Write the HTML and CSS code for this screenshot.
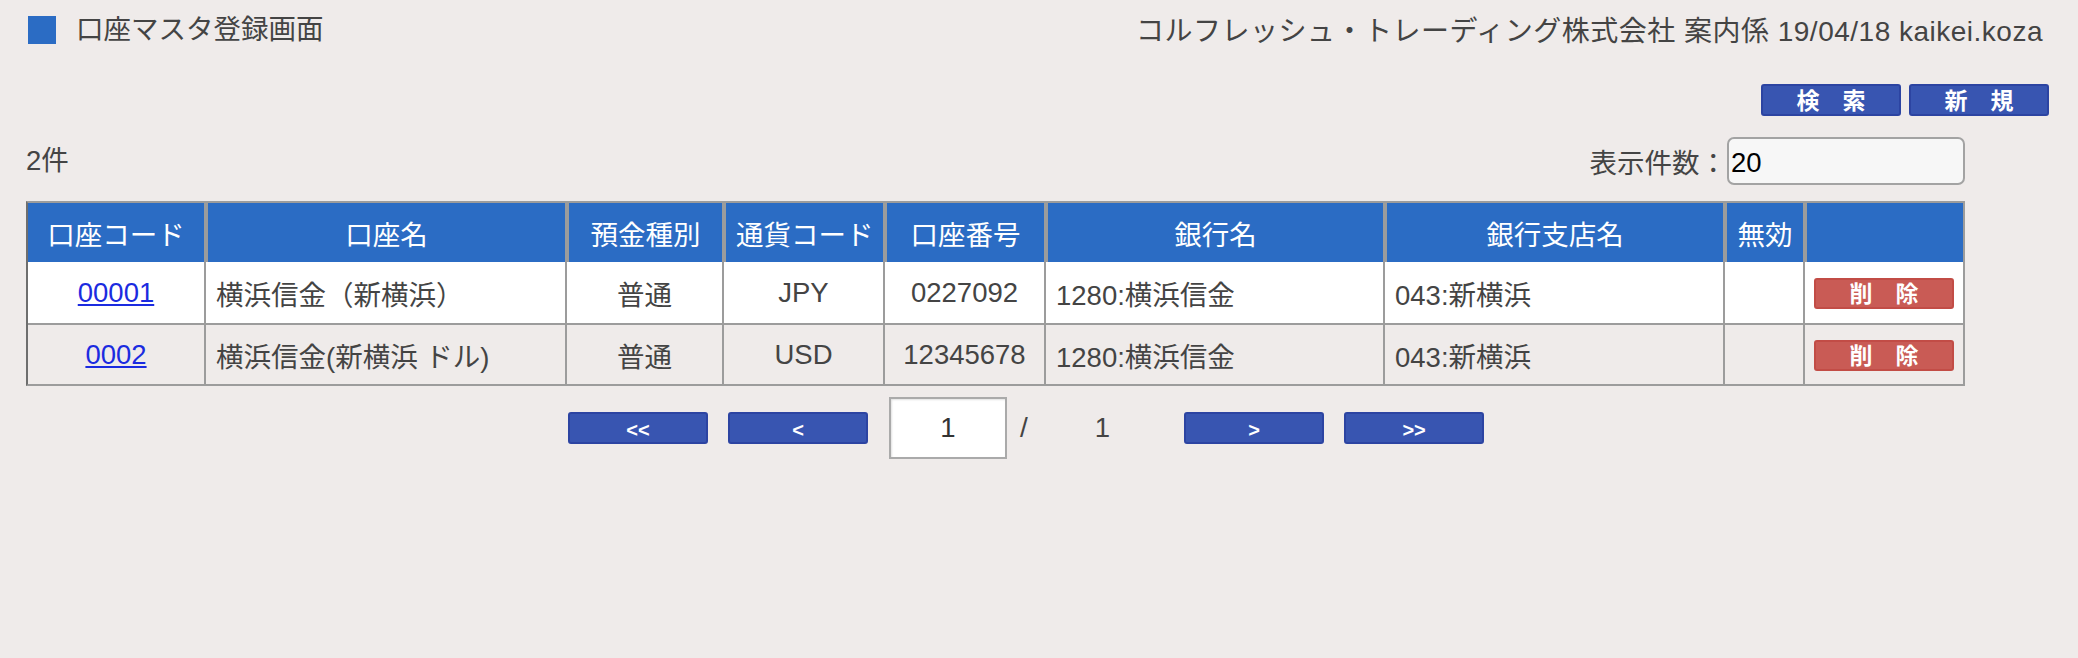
FILE: index.html
```html
<!DOCTYPE html>
<html lang="ja">
<head>
<meta charset="utf-8">
<title>口座マスタ登録画面</title>
<link rel="stylesheet" href="styles.css">
</head>
<body>
<div class="page">
  <header class="titlebar">
    <h1 class="title"><span class="mark"></span>口座マスタ登録画面</h1>
    <div class="meta">コルフレッシュ・トレーディング株式会社 案内係 19/04/18 kaikei.koza</div>
  </header>

  <div class="actions">
    <button class="btn btn-blue btn-action">検　索</button>
    <button class="btn btn-blue btn-action">新　規</button>
  </div>

  <div class="listbar">
    <span class="count">2件</span>
    <label class="per">表示件数：<input class="per-input" type="text" value="20"></label>
  </div>

  <table class="grid">
    <colgroup>
      <col class="w-code"><col class="w-name"><col class="w-kind"><col class="w-cur"><col class="w-no"><col class="w-bank"><col class="w-branch"><col class="w-inv"><col class="w-del">
    </colgroup>
    <thead>
      <tr>
        <th>口座コード</th>
        <th>口座名</th>
        <th>預金種別</th>
        <th>通貨コード</th>
        <th>口座番号</th>
        <th>銀行名</th>
        <th>銀行支店名</th>
        <th>無効</th>
        <th></th>
      </tr>
    </thead>
    <tbody>
      <tr class="odd">
        <td class="center"><a href="#" class="code-link">00001</a></td>
        <td>横浜信金（新横浜）</td>
        <td class="center">普通</td>
        <td class="center">JPY</td>
        <td class="center">0227092</td>
        <td>1280:横浜信金</td>
        <td>043:新横浜</td>
        <td></td>
        <td class="center"><button class="btn btn-red">削　除</button></td>
      </tr>
      <tr class="even">
        <td class="center"><a href="#" class="code-link">0002</a></td>
        <td>横浜信金(新横浜 ドル)</td>
        <td class="center">普通</td>
        <td class="center">USD</td>
        <td class="center">12345678</td>
        <td>1280:横浜信金</td>
        <td>043:新横浜</td>
        <td></td>
        <td class="center"><button class="btn btn-red">削　除</button></td>
      </tr>
    </tbody>
  </table>

  <div class="pager">
    <button class="btn btn-blue btn-page">&lt;&lt;</button>
    <button class="btn btn-blue btn-page gap-l">&lt;</button>
    <input class="page-input" type="text" value="1">
    <span class="slash">/</span>
    <span class="total">1</span>
    <button class="btn btn-blue btn-page next">&gt;</button>
    <button class="btn btn-blue btn-page gap-l">&gt;&gt;</button>
  </div>
</div>
</body>
</html>
```

FILE: styles.css
```css
html, body {
  margin: 0;
  padding: 0;
  background: #efebea;
}

body {
  font-family: "Liberation Sans", "Noto Sans CJK JP", sans-serif;
  font-size: 27.5px;
  color: #444;
}

.page {
  padding: 16px 29px 0 26px;
}

.titlebar {
  display: flex;
  justify-content: space-between;
  align-items: center;
  padding: 0 6px 0 2px;
  height: 28px;
}

.title {
  display: flex;
  align-items: center;
  margin: 0;
  font-size: 27.5px;
  font-weight: normal;
  color: #444;
  line-height: 28px;
}

.mark {
  display: inline-block;
  width: 28px;
  height: 28px;
  background: #2b6cc4;
  margin-right: 20px;
}

.meta {
  padding-top: 4px;
  line-height: 28px;
  font-size: 28px;
  letter-spacing: 0.5px;
  color: #444;
}

.actions {
  display: flex;
  justify-content: flex-end;
  gap: 8px;
  margin-top: 40px;
}

.btn {
  font-family: "Liberation Sans", "Noto Sans CJK JP", sans-serif;
  font-weight: bold;
  color: #fff;
  border-radius: 3px;
  padding: 0;
  cursor: pointer;
}

.btn-blue {
  background: #3855b1;
  border: 2px solid #2c44a2;
}

.btn-action {
  width: 140px;
  height: 32px;
  font-size: 23px;
  line-height: 26px;
  padding-top: 2px;
}

.btn-red {
  width: 140px;
  height: 31px;
  font-size: 23px;
  line-height: 25px;
  padding-top: 2px;
  background: #c95b55;
  border: 2px solid #c24c46;
}

.listbar {
  width: 1939px;
  display: flex;
  justify-content: space-between;
  align-items: center;
  margin-top: 21px;
}

.count {
  line-height: 30px;
}

.per {
  display: flex;
  align-items: center;
}

.per-input {
  box-sizing: border-box;
  width: 238px;
  height: 48px;
  margin: 0;
  padding: 4px 2px 0;
  border: 2px solid #a3a3a3;
  border-radius: 7px;
  background: #f7f7f7;
  font-family: "Liberation Sans", "Noto Sans CJK JP", sans-serif;
  font-size: 27.5px;
  color: #000;
}

.grid {
  margin-top: 16px;
  width: 1939px;
  table-layout: fixed;
  border-collapse: separate;
  border-spacing: 0;
  border: 2px solid #9c9c9c;
  border-left-color: #6e6e6e;
}

.w-code { width: 176px; }
.w-name { width: 361px; }
.w-kind { width: 157px; }
.w-cur { width: 161px; }
.w-no { width: 161px; }
.w-bank { width: 339px; }
.w-branch { width: 340px; }
.w-inv { width: 80px; }
.w-del { width: 160px; }

.grid th,
.grid td {
  box-sizing: border-box;
  padding: 0 10px;
  white-space: nowrap;
  overflow: hidden;
}

.grid th {
  height: 59px;
  background: #2b6cc4;
  color: #fff;
  font-weight: normal;
  text-align: center;
  border-left: 4px solid #9c9c9c;
}

.grid th:first-child {
  border-left: 0;
}

.grid td {
  height: 61px;
  border-left: 2px solid #9c9c9c;
  color: #444;
  text-align: left;
}

.grid td:first-child {
  border-left: 0;
}

.grid tr.odd td {
  background: #fff;
}

.grid tr.even td {
  background: #efebea;
  border-top: 2px solid #9c9c9c;
}

.grid td.center {
  text-align: center;
  padding: 0;
}

.code-link {
  color: #1b2be0;
  text-decoration: underline;
}

.pager {
  display: flex;
  align-items: center;
  margin-top: 11px;
  padding-left: 542px;
}

.btn-page {
  width: 140px;
  height: 32px;
  font-size: 20px;
  line-height: 24px;
  padding-top: 4px;
}

.gap-l {
  margin-left: 20px;
}

.page-input {
  box-sizing: border-box;
  width: 118px;
  height: 62px;
  margin: 0 0 0 21px;
  padding: 0;
  border: 2px solid #aaa;
  background: #fff;
  box-shadow: inset 1px 1px 2px rgba(0, 0, 0, 0.12);
  text-align: center;
  font-family: "Liberation Sans", "Noto Sans CJK JP", sans-serif;
  font-size: 27.5px;
  color: #333;
}

.slash {
  margin-left: 13px;
  color: #444;
  font-size: 28px;
}

.total {
  margin-left: 67px;
  color: #444;
}

.next {
  margin-left: 74px;
}
```
